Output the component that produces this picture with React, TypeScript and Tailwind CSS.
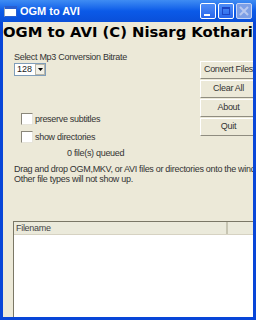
import { ReactNode } from "react"

function TitleButton({ kind }: { kind: "min" | "max" | "close" }) {
  if (kind === "close") {
    return (
      <div className="w-[16px] h-[16px] rounded-[2px] border border-[#c6d4f5] bg-[#7d9fe6] flex items-center justify-center">
        <svg width="10" height="10" viewBox="0 0 10 10">
          <path d="M1 1 L9 9 M9 1 L1 9" stroke="#b9c9ef" strokeWidth="2" />
        </svg>
      </div>
    )
  }
  return (
    <div className="w-[16px] h-[16px] rounded-[2px] border border-white bg-linear-to-b from-[#4f8df7] to-[#2a66ea] relative">
      {kind === "min" ? (
        <div className="absolute left-[3px] bottom-[2px] w-[6px] h-[2px] bg-white" />
      ) : (
        <div className="absolute left-[3px] top-[3px] w-[8px] h-[8px] border border-[#1c46c4] border-t-2" />
      )}
    </div>
  )
}

function FlatButton({ children }: { children: ReactNode }) {
  return (
    <div className="h-[18px] w-[56px] border-t border-l border-white border-b border-b-[#8f8c80] flex items-center justify-center text-[9px] tracking-[-0.3px] text-[#333] whitespace-nowrap">
      {children}
    </div>
  )
}

function Check({ label }: { label: string }) {
  return (
    <div className="flex items-center gap-[2px] h-[13px]">
      <div className="w-[12px] h-[12px] bg-white border-t border-l border-[#8a877a] border-b border-r border-b-[#e6e4da] border-r-[#e6e4da]" />
      <span className="text-[9px] leading-[12px] tracking-[-0.3px] text-[#333]">{label}</span>
    </div>
  )
}

export default function App() {
  return (
    <div className="w-[256px] h-[320px] flex flex-col overflow-hidden bg-[#ECE9D8] font-['Liberation_Sans',Arial,sans-serif]">
      {/* title bar */}
      <div className="h-[22px] shrink-0 flex items-center pl-[4px] pr-[4px] bg-linear-to-b from-[#3f8cf3] via-[#0b5ae8] to-[#0a4fd9]">
        <div className="w-[13px] h-[11px] bg-white border-t-[3px] border-[#2a5fd0] border border-l-[#9ab] shrink-0" />
        <span className="ml-[3px] text-white text-[11px] font-bold leading-none">OGM to AVI</span>
        <div className="ml-auto flex gap-[2px]">
          <TitleButton kind="min" />
          <TitleButton kind="max" />
          <TitleButton kind="close" />
        </div>
      </div>

      {/* body */}
      <div className="flex-1 min-h-0 flex flex-col overflow-hidden border-l-[3px] border-r-[3px] border-b-[3px] border-[#0846d8]">
        <h1 className="text-[14.8px] font-bold leading-[20px] whitespace-nowrap text-black font-['DejaVu_Sans',Verdana,sans-serif]">
          OGM to AVI (C) Nisarg Kothari
        </h1>

        <div className="flex shrink-0">
          <div className="w-[197px] shrink-0 pl-[11px]">
            <div className="mt-[9px] text-[9px] leading-[12px] tracking-[-0.3px] text-[#333] whitespace-nowrap">
              Select Mp3 Conversion Bitrate
            </div>
            <div className="w-[32px] h-[13px] bg-white border border-[#7f9db9] flex items-center">
              <span className="text-[9px] leading-none pl-[2px] text-[#222]">128</span>
              <div className="ml-auto w-[10px] h-[11px] bg-[#f2f0e6] border border-[#b9b6a8] flex items-center justify-center">
                <svg width="5" height="3" viewBox="0 0 5 3">
                  <path d="M0 0 H5 L2.5 3 Z" fill="#000" />
                </svg>
              </div>
            </div>
            <div className="mt-[36px] pl-[7px] flex flex-col gap-[5px]">
              <Check label="preserve subtitles" />
              <Check label="show directories" />
            </div>
          </div>
          <div className="w-[56px] shrink-0 flex flex-col gap-[1px] mt-[19px]">
            <FlatButton>Convert Files</FlatButton>
            <FlatButton>Clear All</FlatButton>
            <FlatButton>About</FlatButton>
            <FlatButton>Quit</FlatButton>
          </div>
        </div>

        <div className="mt-[4px] pl-[64px] text-[9px] leading-[12px] tracking-[-0.3px] text-[#333] whitespace-nowrap">
          0 file(s) queued
        </div>
        <div className="mt-[5px] pl-[11px] text-[9px] leading-[10px] tracking-[-0.3px] text-[#333] whitespace-nowrap">
          <div>Drag and drop OGM,MKV, or AVI files or directories onto the window.</div>
          <div>Other file types will not show up.</div>
        </div>

        {/* file list */}
        <div className="mt-[37px] ml-[10px] flex-1 min-h-0 flex flex-col border-t border-l border-[#7a7766] bg-white">
          <div className="h-[13px] shrink-0 flex bg-[#ebeadb] border-b border-[#d6d2c2]">
            <div className="w-[214px] shrink-0 border-r-2 border-r-[#c7c5b2] pl-[2px] text-[9px] leading-[12px] tracking-[-0.3px] text-[#444]">
              Filename
            </div>
            <div className="flex-1" />
          </div>
          <div className="flex-1" />
        </div>
      </div>
    </div>
  )
}
